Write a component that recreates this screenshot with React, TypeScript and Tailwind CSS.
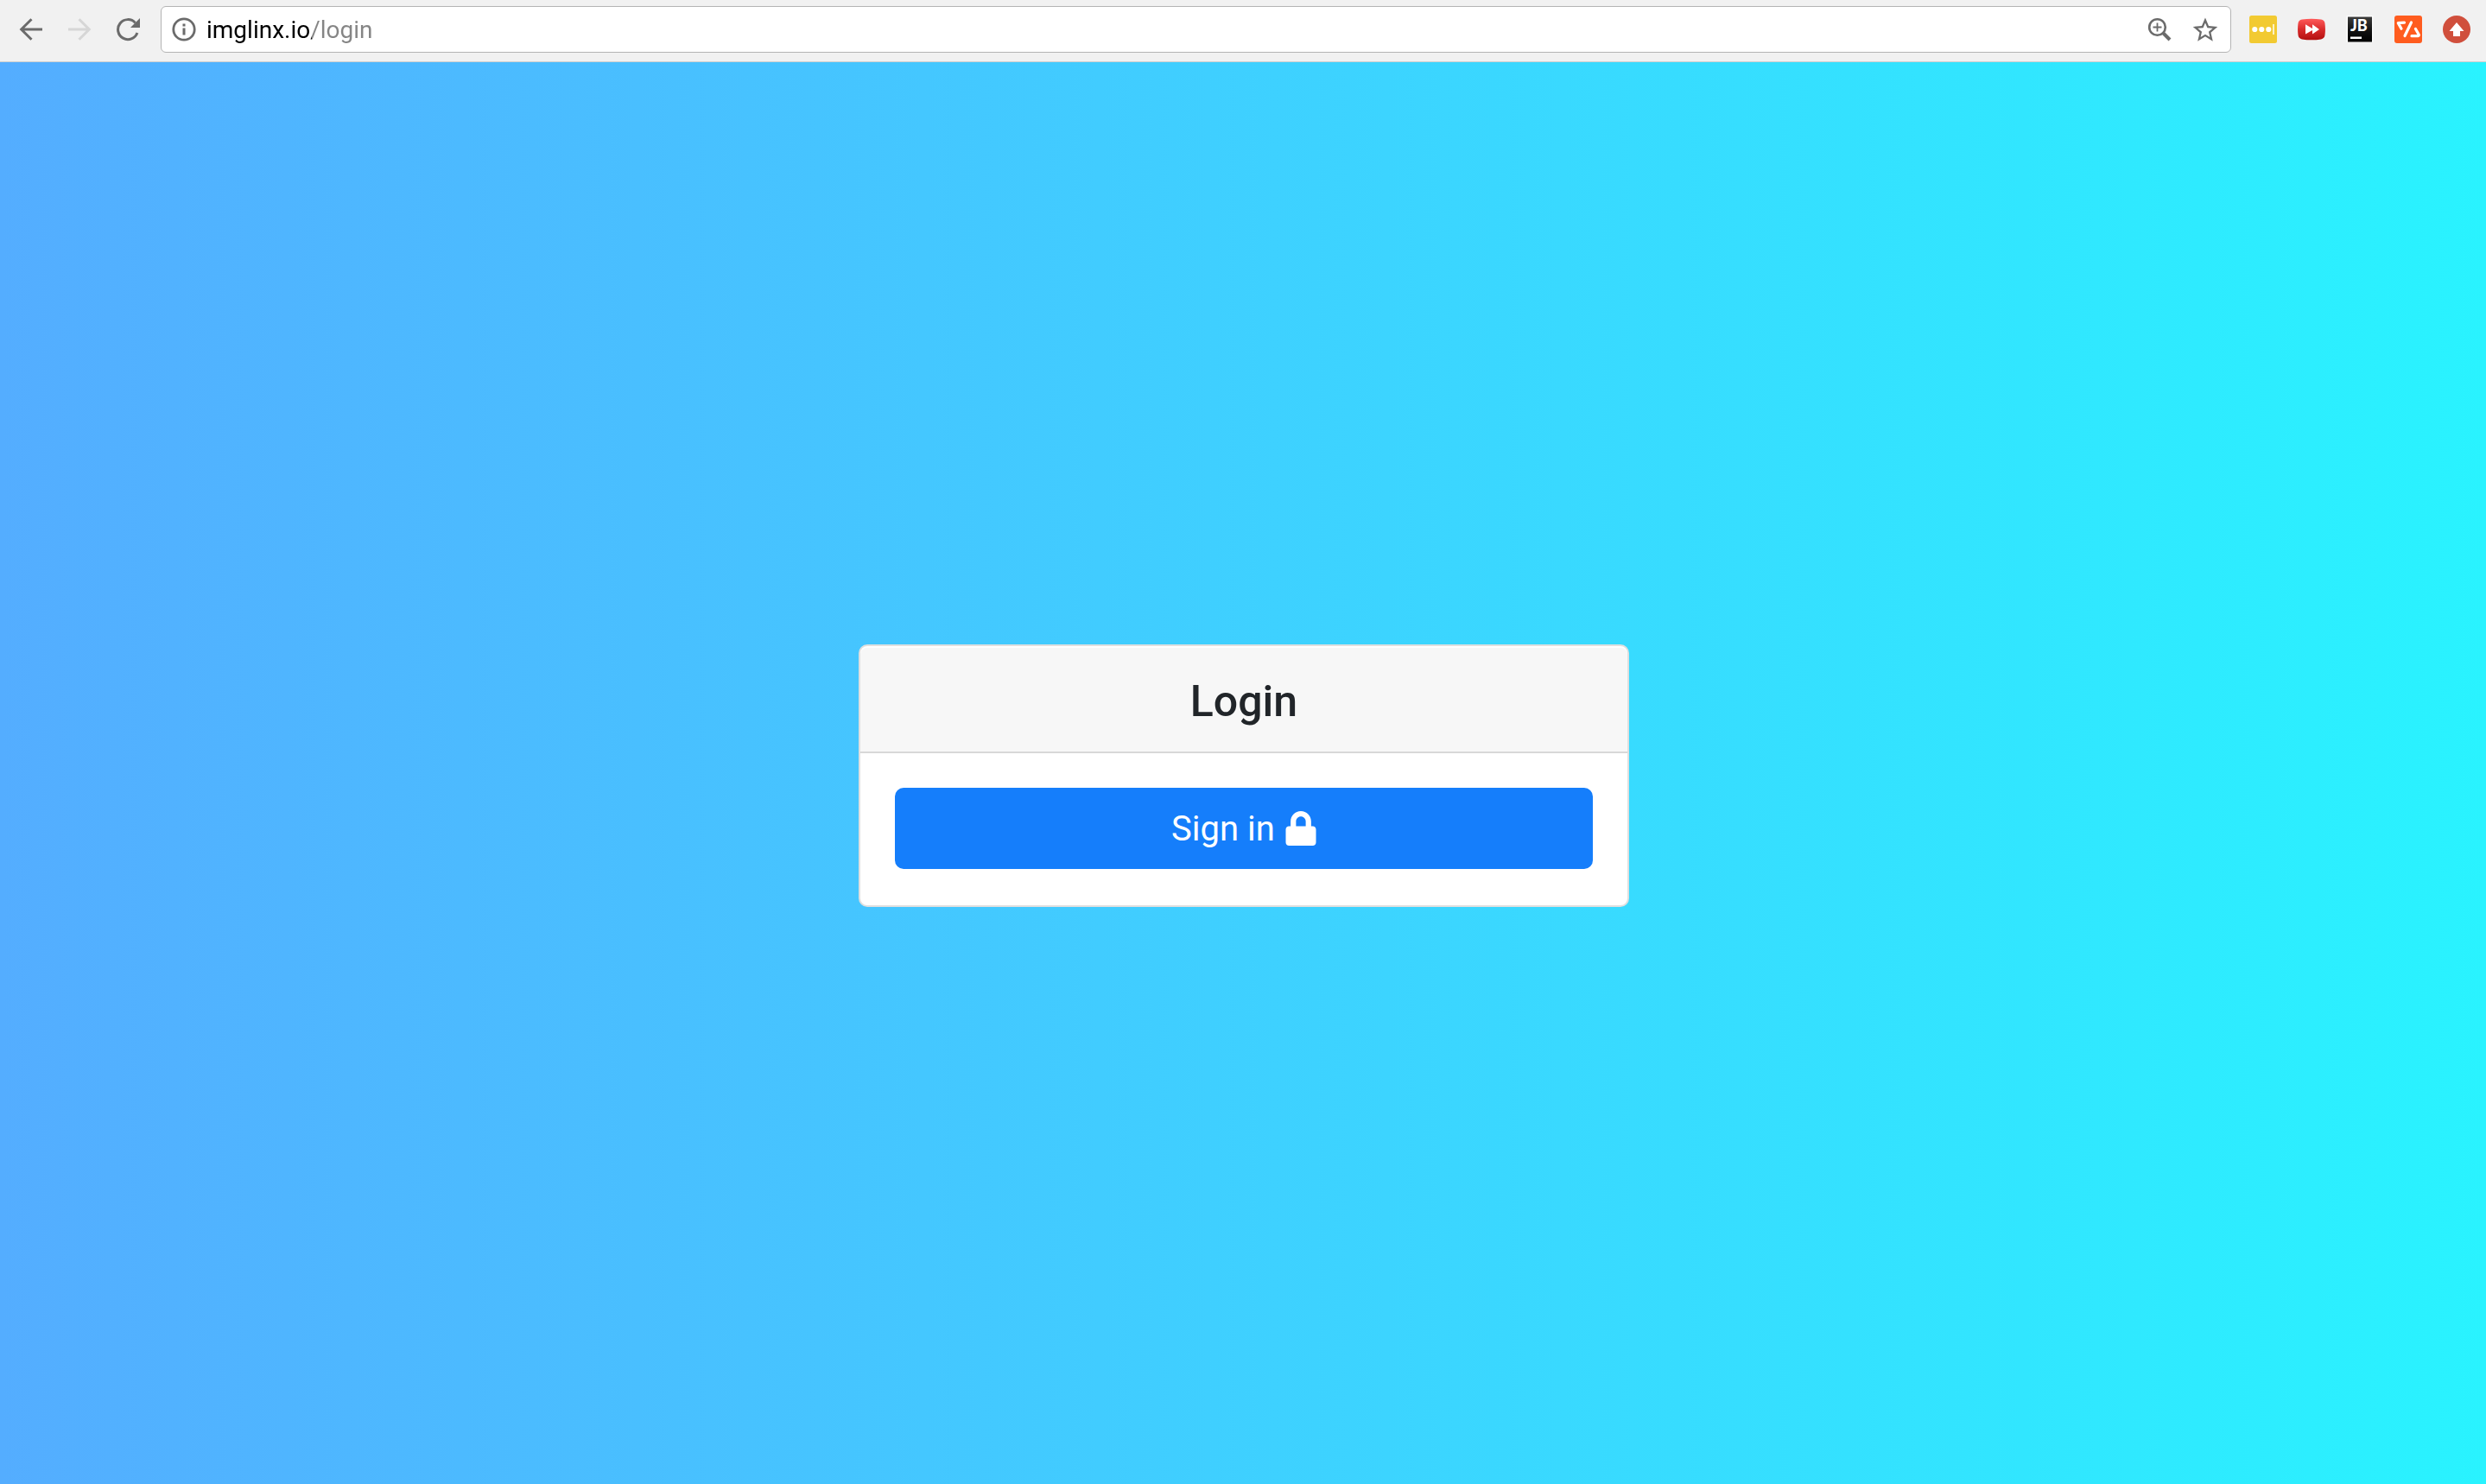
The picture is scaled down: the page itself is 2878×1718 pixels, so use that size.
import type { ReactNode } from "react";
import { FaLock } from "react-icons/fa";

function BackIcon() {
  return (
    <svg width="28" height="28" viewBox="0 0 28 28" fill="none" stroke="currentColor" strokeWidth="3" aria-hidden="true">
      <path d="M27 14H3M14.500 2.200 2.700 14l11.800 11.800" />
    </svg>
  );
}

function ForwardIcon() {
  return (
    <svg width="28" height="28" viewBox="0 0 28 28" fill="none" stroke="currentColor" strokeWidth="3" aria-hidden="true">
      <path d="M1 14h24M13.500 2.200 25.300 14 13.500 25.800" />
    </svg>
  );
}

function ReloadIcon() {
  return (
    <svg width="28" height="28" viewBox="0 0 28 28" aria-hidden="true">
      <path d="M24.900 18A11.500 11.500 0 1 1 22.600 6.400" fill="none" stroke="currentColor" strokeWidth="3" />
      <path d="M28 1v11H17z" fill="currentColor" />
    </svg>
  );
}

function InfoIcon() {
  return (
    <svg width="28" height="28" viewBox="0 0 28 28" aria-hidden="true">
      <circle cx="14" cy="14" r="12.200" fill="none" stroke="currentColor" strokeWidth="2.800" />
      <path d="M12.500 7.500h3v3h-3zM12.500 12.500h3v8h-3z" fill="currentColor" />
    </svg>
  );
}

function ZoomIcon() {
  return (
    <svg width="28" height="28" viewBox="0 0 28 28" fill="none" stroke="currentColor" aria-hidden="true">
      <circle cx="11.500" cy="11.500" r="9.300" strokeWidth="2.600" />
      <path d="M18.500 18.500l7.500 7.500" strokeWidth="4" />
      <path d="M6.500 11.500h10M11.500 6.500v10" strokeWidth="1.800" />
    </svg>
  );
}

function StarIcon() {
  return (
    <svg width="30" height="30" viewBox="0 0 24 24" fill="currentColor" aria-hidden="true">
      <path d="M22 9.240l-7.190-.620L12 2 9.190 8.630 2 9.240l5.460 4.730L5.820 21 12 17.270 18.180 21l-1.630-7.030L22 9.240zM12 15.400l-3.760 2.270 1-4.280-3.320-2.880 4.380-.380L12 6.100l1.710 4.040 4.380.380-3.320 2.880 1 4.280L12 15.400z" transform="translate(-1.700 -1) scale(1.140)" />
    </svg>
  );
}

function PasswordIcon() {
  return (
    <svg width="32" height="32" viewBox="0 0 32 32" aria-hidden="true">
      <rect width="32" height="32" rx="2.500" fill="#f2ca32" />
      <circle cx="6.300" cy="16" r="3.100" fill="#fff" />
      <circle cx="14.300" cy="16" r="3.100" fill="#fff" />
      <circle cx="22.300" cy="16" r="3.100" fill="#fff" />
      <path d="M27 10h2v12h-2z" fill="#fcf1c4" />
    </svg>
  );
}

function FastForwardIcon() {
  return (
    <svg width="32" height="32" viewBox="0 0 32 32" aria-hidden="true">
      <defs>
        <linearGradient id="playerRed" x1="0" y1="0" x2="0" y2="1">
          <stop offset="0" stopColor="#ff5a5a" />
          <stop offset="0.500" stopColor="#d92b2b" />
          <stop offset="1" stopColor="#b31010" />
        </linearGradient>
      </defs>
      <path d="M5 4.500Q16 2.900 27 4.500Q31 5 31.500 9Q32.400 16 31.500 22.500Q31 26.800 27 27.400Q16 29.300 5 27.400Q1 26.800.500 22.500Q-.400 16 .500 9Q1 5 5 4.500z" fill="url(#playerRed)" />
      <path d="M9 10.300 17 15v-4.700L25 16l-8 5.500V17l-8 4.500z" fill="#fff" />
    </svg>
  );
}

function JetBrainsIcon() {
  return (
    <svg width="32" height="32" viewBox="0 0 32 32" aria-hidden="true">
      <defs>
        <linearGradient id="jbDark" x1="0" y1="0" x2="0" y2="1">
          <stop offset="0" stopColor="#3c3c3c" />
          <stop offset="0.550" stopColor="#111" />
          <stop offset="1" stopColor="#000" />
        </linearGradient>
      </defs>
      <path d="M.500 0h31v31H.500z" fill="#fbfbfb" />
      <path d="M2 1.500h28v29H2z" fill="url(#jbDark)" />
      <text x="5" y="18" fontFamily="Lato, sans-serif" fontWeight="900" fontSize="18" fill="#fff">JB</text>
      <path d="M5 24.500h13v2.500H5z" fill="#fff" />
    </svg>
  );
}

function CodeIcon() {
  return (
    <svg width="32" height="32" viewBox="0 0 32 32" aria-hidden="true">
      <rect width="32" height="32" rx="3" fill="#ff5c1f" />
      <g fill="none" stroke="#fff" strokeWidth="3.200" strokeLinecap="round" strokeLinejoin="round">
        <path d="M11.500 8.200 4.300 8.600 8 15.200" />
        <path d="M19.500 8 12 23.500" />
        <path d="M24.500 15.500 28.300 22.200Q28.500 23.600 27 23.700H20" />
      </g>
    </svg>
  );
}

function UploadIcon() {
  return (
    <svg width="32" height="32" viewBox="0 0 32 32" aria-hidden="true">
      <circle cx="16" cy="16" r="16" fill="#d04f3c" />
      <path d="M16 8 24.500 18H20v6h-8v-6H7.500z" fill="#fff" />
    </svg>
  );
}

function IconButton({ label, children }: { label: string; children: ReactNode }) {
  return (
    <button type="button" aria-label={label} className="flex shrink-0 cursor-pointer items-center justify-center">
      {children}
    </button>
  );
}

function Toolbar() {
  return (
    <header className="flex h-[72px] shrink-0 items-center border-b border-[#cfd0d0] bg-[#f1f1f1] pr-[18px] pb-[3px] pl-[22px] text-[#6b6b6b]">
      <nav aria-label="History" className="flex items-center gap-7 pr-6">
        <IconButton label="Back">
          <BackIcon />
        </IconButton>
        <button type="button" aria-label="Forward" disabled className="flex text-[#d6d6d6]">
          <ForwardIcon />
        </button>
        <IconButton label="Reload">
          <ReloadIcon />
        </IconButton>
      </nav>
      <form
        className="flex h-[54px] min-w-0 flex-1 items-center rounded-md border border-[#b4b4b4] bg-white pr-3.5 pl-3"
        onSubmit={(event) => event.preventDefault()}
      >
        <IconButton label="Site information">
          <InfoIcon />
        </IconButton>
        <input
          type="text"
          aria-label="Address"
          defaultValue="imglinx.io/login"
          spellCheck={false}
          className="ml-3 min-w-0 flex-1 bg-[linear-gradient(to_right,#000_122px,#858585_122px)] bg-clip-text pt-0.5 font-['Roboto',sans-serif] text-[28px] leading-9 text-transparent caret-black outline-none"
        />
        <div className="flex items-center gap-6">
          <IconButton label="Zoom">
            <ZoomIcon />
          </IconButton>
          <IconButton label="Bookmark this page">
            <StarIcon />
          </IconButton>
        </div>
      </form>
      <div className="flex items-center gap-6 pl-[21px]">
        <IconButton label="Password manager">
          <PasswordIcon />
        </IconButton>
        <IconButton label="Video speed">
          <FastForwardIcon />
        </IconButton>
        <IconButton label="JetBrains">
          <JetBrainsIcon />
        </IconButton>
        <IconButton label="Code tools">
          <CodeIcon />
        </IconButton>
        <IconButton label="Upload">
          <UploadIcon />
        </IconButton>
      </div>
    </header>
  );
}

function LoginCard() {
  return (
    <section
      aria-labelledby="login-title"
      className="w-full max-w-[892px] rounded-[10px] border-2 border-[#dfdfdf] bg-white pt-0.5 font-['Roboto',sans-serif]"
    >
      <div className="rounded-t-lg border-b-2 border-[#d8d8d8] bg-[#f7f7f7] pt-8 pb-7">
        <h1 id="login-title" className="text-center text-[50px] leading-[60px] font-medium text-[#212529]">
          Login
        </h1>
      </div>
      <div className="p-10 pb-[42px]">
        <button
          type="button"
          className="flex h-[94px] w-full cursor-pointer items-center justify-center gap-3 rounded-[10px] bg-[#157efb] text-[40px] leading-[60px] text-white"
        >
          <span className="pt-0.5">Sign in</span>
          <FaLock className="h-10 w-9" aria-hidden="true" />
        </button>
      </div>
    </section>
  );
}

export default function App() {
  return (
    <div className="flex min-h-screen flex-col">
      <Toolbar />
      <main className="flex flex-1 items-center justify-center bg-linear-[to_right,#54adff,#29f3ff] pt-1.5 pl-0.5">
        <LoginCard />
      </main>
    </div>
  );
}
